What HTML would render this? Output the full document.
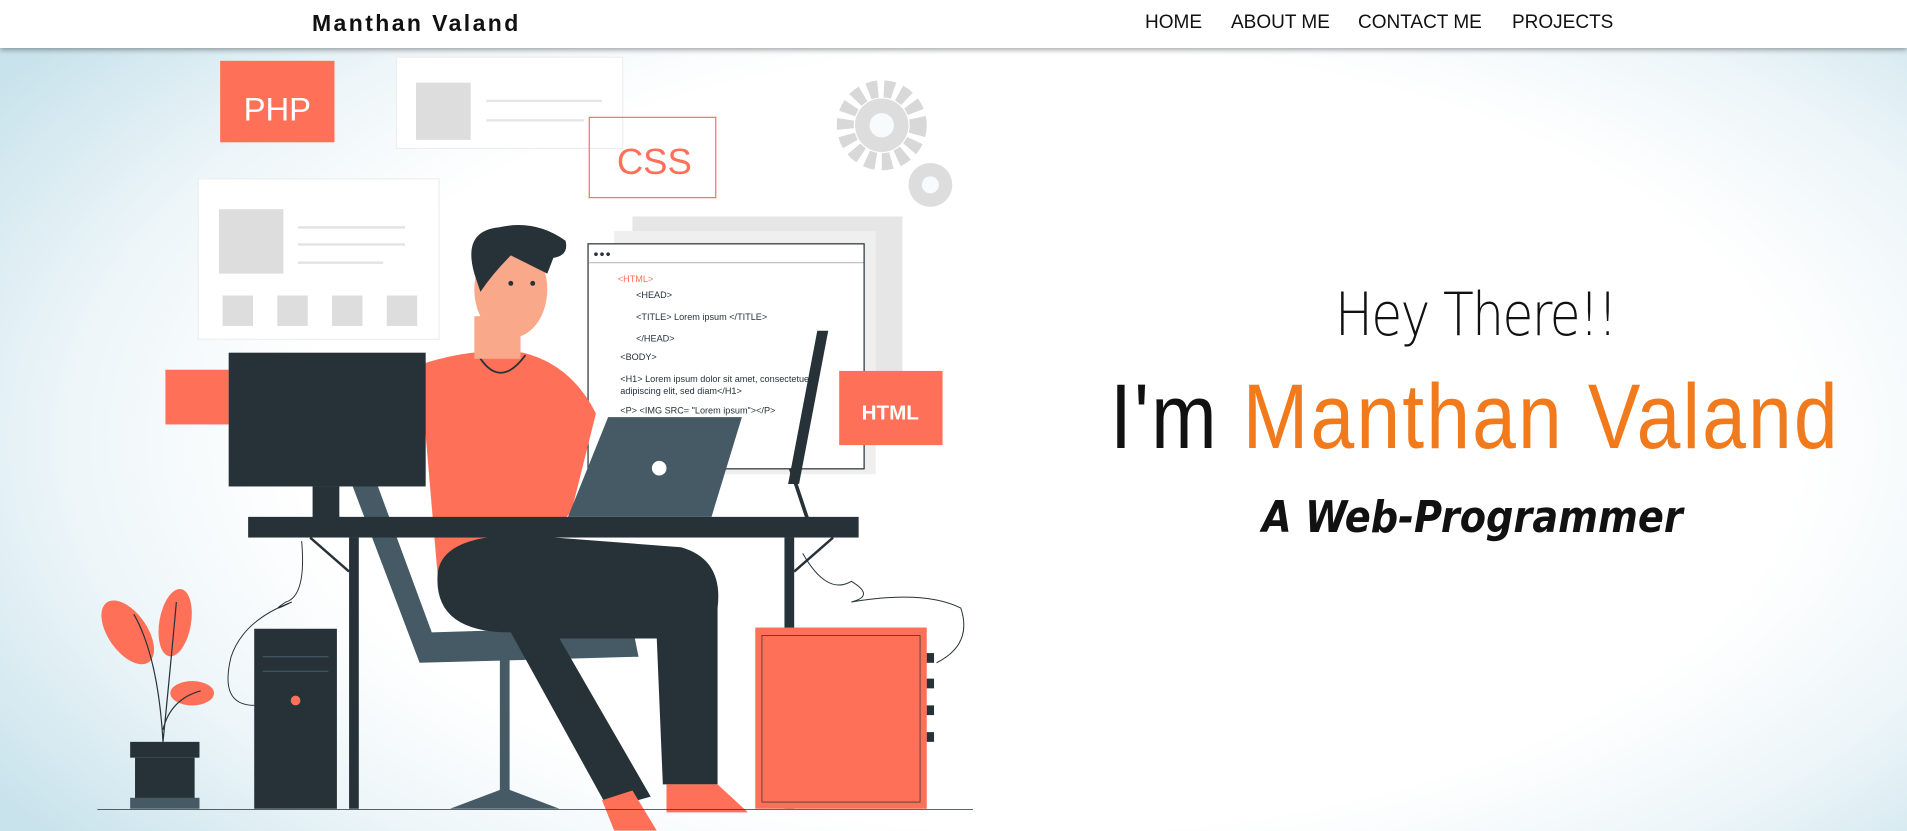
<!DOCTYPE html>
<html><head><meta charset="utf-8"><style>
html,body{margin:0;padding:0;width:1907px;height:831px;overflow:hidden;background:#fff}
body{position:relative;font-family:"Liberation Sans",sans-serif}
.bg{position:absolute;left:0;top:0;width:1907px;height:831px;background:radial-gradient(ellipse 1250px 650px at 1050px 440px,#ffffff 60%,#eef6f9 78%,#c9e3ec 100%)}
svg.ill{position:absolute;left:0;top:0}
.nav{position:absolute;left:0;top:0;width:1907px;height:48px;background:#fff;box-shadow:0 2px 5px rgba(0,0,0,.35);z-index:5}
.logo{position:absolute;left:312px;top:10px;font-size:23px;font-weight:bold;letter-spacing:2.4px;color:#111}
.menu{position:absolute;top:12px;font-size:19px;color:#111}
.t1{position:absolute;left:1335px;top:280px;font-family:"DejaVu Sans",sans-serif;font-size:60px;color:#111;letter-spacing:-2px;transform:scaleX(.84);transform-origin:left;font-weight:300}
.t2{position:absolute;left:1110px;top:365px;font-size:92px;color:#111;white-space:nowrap;transform:scaleX(.855);transform-origin:left;font-weight:normal;letter-spacing:2.5px}
.t2 span{color:#f07a1c}
.t3{position:absolute;left:1262px;top:492px;font-family:"DejaVu Sans",sans-serif;font-size:44px;font-weight:bold;font-style:italic;color:#111;transform:scaleX(.87);transform-origin:left;white-space:nowrap}
</style></head><body>
<div class="bg"></div>
<svg class="ill" width="1907" height="831" viewBox="0 0 1568 683.3">
<g font-family="Liberation Sans, sans-serif">
<rect x="326" y="47" width="186" height="75" fill="#fff" stroke="#eee"/>
<rect x="342" y="68" width="45" height="47" fill="#ddd"/>
<rect x="400" y="82" width="95" height="2" fill="#e6e6e6"/><rect x="400" y="98" width="80" height="2" fill="#e6e6e6"/>
<rect x="163" y="147" width="198" height="132" fill="#fff" stroke="#eee"/>
<rect x="180" y="172" width="53" height="53" fill="#ddd"/>
<rect x="245" y="186" width="88" height="2" fill="#e3e3e3"/><rect x="245" y="200" width="88" height="2" fill="#e3e3e3"/><rect x="245" y="215" width="70" height="2" fill="#e3e3e3"/>
<rect x="183" y="243" width="25" height="25" fill="#ddd"/><rect x="228" y="243" width="25" height="25" fill="#ddd"/><rect x="273" y="243" width="25" height="25" fill="#ddd"/><rect x="318" y="243" width="25" height="25" fill="#ddd"/>
<circle cx="725" cy="103" r="30" fill="none" stroke="#d8d8d8" stroke-width="14" stroke-dasharray="8 5"/>
<circle cx="725" cy="103" r="22" fill="#ddd"/><circle cx="725" cy="103" r="10" fill="#f7fbfc"/>
<circle cx="765" cy="152" r="18" fill="#ddd"/><circle cx="765" cy="152" r="7" fill="#f7fbfc"/>
<rect x="520" y="178" width="222" height="128" fill="#e6e6e6"/>
<rect x="505" y="190" width="215" height="200" fill="#efefef"/>
<rect x="181" y="50" width="94" height="67" fill="#ff7059"/>
<text x="228" y="99" font-size="27" fill="#fff" text-anchor="middle">PHP</text>
<rect x="484.5" y="96.5" width="104" height="66" fill="none" stroke="#ff7059"/>
<text x="538" y="143" font-size="30" fill="#ff7059" text-anchor="middle">CSS</text>
<rect x="483.5" y="200.5" width="227" height="185" fill="#fff" stroke="#263238"/>
<circle cx="490" cy="209" r="1.5" fill="#263238"/><circle cx="495" cy="209" r="1.5" fill="#263238"/><circle cx="500" cy="209" r="1.5" fill="#263238"/>
<line x1="484" y1="216" x2="710" y2="216" stroke="#bbb"/>
<g font-size="7.5" fill="#263238">
<text x="508" y="232" fill="#ff7059">&lt;HTML&gt;</text>
<text x="523" y="245">&lt;HEAD&gt;</text>
<text x="523" y="263">&lt;TITLE&gt; Lorem ipsum &lt;/TITLE&gt;</text>
<text x="523" y="281">&lt;/HEAD&gt;</text>
<text x="510" y="296">&lt;BODY&gt;</text>
<text x="510" y="314">&lt;H1&gt; Lorem ipsum dolor sit amet, consectetuer</text>
<text x="510" y="324">adipiscing elit, sed diam&lt;/H1&gt;</text>
<text x="510" y="340">&lt;P&gt; &lt;IMG SRC= "Lorem ipsum"&gt;&lt;/P&gt;</text>
</g>
<rect x="690" y="305" width="85" height="61" fill="#ff7059"/>
<text x="732" y="345" font-size="17" font-weight="bold" fill="#fff" text-anchor="middle">HTML</text>
<rect x="136" y="304" width="52" height="45" fill="#ff7059"/>
<polygon points="672,272 681,272 657,398 648,398" fill="#263238"/>
<line x1="650" y1="385" x2="665" y2="430" stroke="#263238" stroke-width="3"/>
<polygon points="290,400 310,398 355,520 520,515 525,540 345,545" fill="#455a64"/>
<rect x="411" y="540" width="8" height="115" fill="#455a64"/>
<polygon points="370,665 460,665 415,648" fill="#455a64"/>
<path d="M345 300 Q390 285 430 290 Q470 300 490 340 L470 420 L430 470 L360 475 Z" fill="#ff7059"/>
<path d="M392 290 Q410 322 432 292" fill="none" stroke="#263238" stroke-width="1.5"/>
<rect x="390" y="260" width="38" height="35" fill="#f9a889"/>
<ellipse cx="420" cy="238" rx="30" ry="40" fill="#f9a889"/>
<path d="M390 225 Q380 190 410 187 Q440 180 465 198 Q468 210 455 212 L450 225 Q430 215 420 210 Q405 225 395 240 Z" fill="#263238"/>
<circle cx="420" cy="233" r="2" fill="#263238"/><circle cx="438" cy="233" r="2" fill="#263238"/>
<path d="M360 470 Q365 440 430 440 L560 450 Q595 460 590 500 L590 645 L545 645 L540 525 L460 525 L535 655 L500 665 L420 520 Q355 520 360 470 Z" fill="#263238"/>
<polygon points="495,658 520,650 540,683 505,683" fill="#ff7059"/>
<polygon points="548,645 590,645 615,668 548,668" fill="#ff7059"/>
<polygon points="500,343 610,343 585,425 467,425" fill="#455a64"/>
<circle cx="542" cy="385" r="6" fill="#fff"/>
<rect x="188" y="290" width="162" height="110" fill="#263238"/>
<rect x="257" y="400" width="22" height="28" fill="#263238"/>
<rect x="204" y="425" width="502" height="17" fill="#263238"/>
<rect x="287" y="442" width="8" height="223" fill="#263238"/>
<rect x="645" y="442" width="8" height="223" fill="#263238"/>
<line x1="255" y1="442" x2="287" y2="470" stroke="#263238" stroke-width="2"/>
<line x1="685" y1="442" x2="653" y2="470" stroke="#263238" stroke-width="2"/>
<path d="M248 445 Q252 490 235 495 Q220 505 240 495 Q200 510 190 540 Q180 580 209 580" fill="none" stroke="#263238" stroke-width="0.8"/>
<path d="M660 455 Q680 490 700 478 Q720 490 700 495 Q760 485 790 500 Q800 530 770 545" fill="none" stroke="#263238" stroke-width="0.8"/>
<rect x="209" y="517" width="68" height="148" fill="#263238"/>
<circle cx="243" cy="576" r="4" fill="#ff7059"/>
<line x1="216" y1="540" x2="270" y2="540" stroke="#455a64"/><line x1="216" y1="552" x2="270" y2="552" stroke="#455a64"/>
<rect x="621" y="516" width="141" height="149" fill="#ff7059"/>
<rect x="626.5" y="522.5" width="130" height="137" fill="none" stroke="#263238" stroke-width="0.6"/>
<rect x="762" y="537" width="6" height="8" fill="#263238"/><rect x="762" y="558" width="6" height="8" fill="#263238"/><rect x="762" y="580" width="6" height="8" fill="#263238"/><rect x="762" y="602" width="6" height="8" fill="#263238"/>
<ellipse cx="105" cy="520" rx="16" ry="30" fill="#ff7059" transform="rotate(-35 105 520)"/>
<ellipse cx="144" cy="512" rx="13" ry="28" fill="#ff7059" transform="rotate(10 144 512)"/>
<ellipse cx="158" cy="570" rx="18" ry="10" fill="#ff7059"/>
<path d="M134 610 Q130 540 110 505 M134 610 Q140 550 145 495 M134 600 Q140 575 165 568" fill="none" stroke="#263238" stroke-width="1"/>
<rect x="107" y="610" width="57" height="13" fill="#263238"/>
<rect x="111" y="623" width="49" height="35" fill="#263238"/>
<rect x="107" y="656" width="57" height="9" fill="#455a64"/>
<line x1="80" y1="665.5" x2="800" y2="665.5" stroke="#263238" stroke-width="0.6"/>
</g>
</svg>
<div class="nav">
<div class="logo">Manthan Valand</div>
<div class="menu" style="left:1145px">HOME</div>
<div class="menu" style="left:1231px">ABOUT ME</div>
<div class="menu" style="left:1358px">CONTACT ME</div>
<div class="menu" style="left:1512px">PROJECTS</div>
</div>
<div class="t1">Hey There!!</div>
<div class="t2">I'm <span>Manthan Valand</span></div>
<div class="t3">A Web-Programmer</div>
</body></html>
